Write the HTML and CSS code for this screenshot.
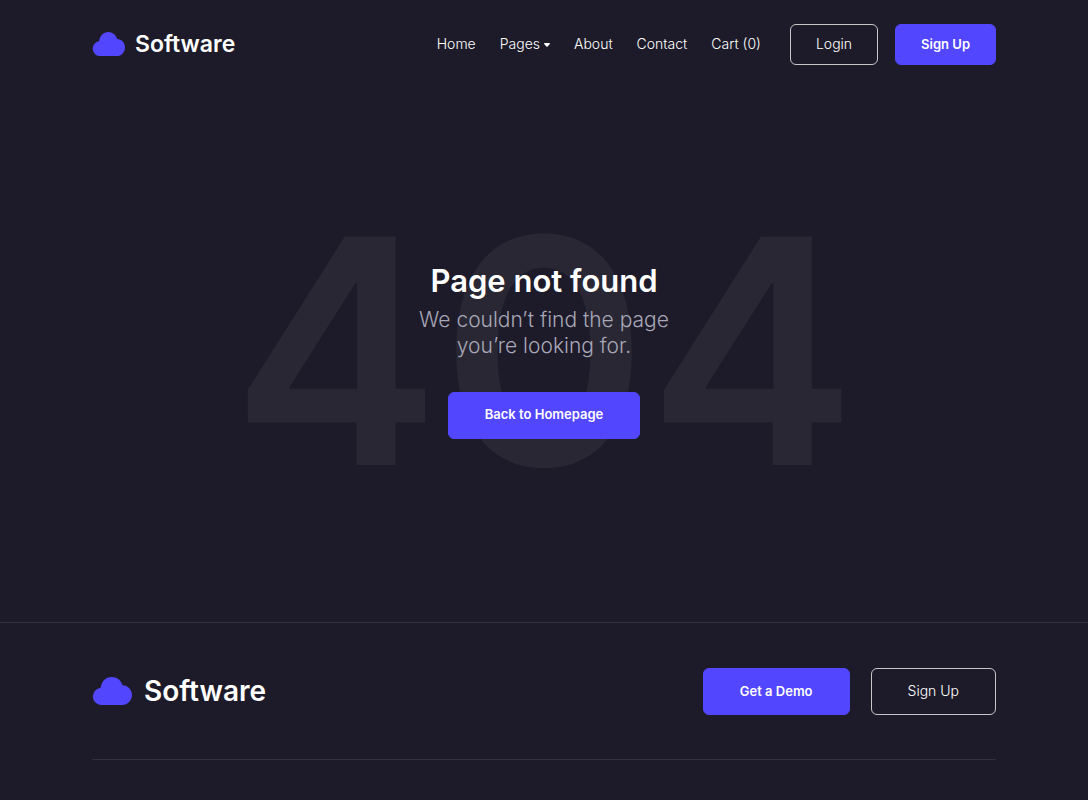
FILE: index.html
```html
<!DOCTYPE html>
<html lang="en">
<head>
<meta charset="utf-8">
<meta name="viewport" content="width=device-width, initial-scale=1">
<title>Page not found – Software</title>
<link rel="stylesheet" href="styles.css">
</head>
<body>
<header class="container header">
  <a class="logo" href="#">
    <svg class="logo-icon" viewBox="0 0 40 28" preserveAspectRatio="none" aria-hidden="true"><path d="M9 28a9 8.700 0 0 1-.3-17.300C9.300 4.500 13.800 0 19.700 0c5.300 0 9.500 3.400 10.800 8.200C36 8.400 40 12.700 40 18c0 5.600-4.300 10-10 10z"/></svg>
    <span>Software</span>
  </a>
  <nav class="nav">
    <a href="#">Home</a>
    <a class="nav-pages" href="#">Pages <svg class="caret" viewBox="0 0 6 4" aria-hidden="true"><path d="M.7 0h4.600q1 .3.500 1L3.600 3.600q-.6.500-1.200 0L.2 1Q-.3.300.7 0z"/></svg></a>
    <a href="#">About</a>
    <a href="#">Contact</a>
    <a href="#">Cart (0)</a>
  </nav>
  <div class="header-actions">
    <a class="btn btn-small btn-outline" href="#">Login</a>
    <a class="btn btn-small btn-primary" href="#">Sign Up</a>
  </div>
</header>
<main class="hero">
  <div class="hero-code" aria-hidden="true">404</div>
  <div class="hero-content">
    <h1>Page not found</h1>
    <p>We couldn’t find the page<br>you’re looking for.</p>
    <a class="btn btn-primary" href="#">Back to Homepage</a>
  </div>
</main>
<footer class="footer">
  <div class="container footer-row">
    <a class="logo logo-large" href="#">
      <svg class="logo-icon" viewBox="0 0 40 28" preserveAspectRatio="none" aria-hidden="true"><path d="M9 28a9 8.700 0 0 1-.3-17.300C9.300 4.500 13.800 0 19.700 0c5.300 0 9.500 3.400 10.800 8.200C36 8.400 40 12.700 40 18c0 5.600-4.300 10-10 10z"/></svg>
      <span>Software</span>
    </a>
    <div class="footer-actions">
      <a class="btn btn-primary" href="#">Get a Demo</a>
      <a class="btn btn-outline" href="#">Sign Up</a>
    </div>
  </div>
</footer>
</body>
</html>
```
FILE: styles.css
```css
* { box-sizing: border-box; }
body {
  margin: 0;
  background: #1d1b29;
  color: #fff;
  font-family: Inter, "Liberation Sans", sans-serif;
  font-size: 14px;
  font-weight: 300;
}
a { color: inherit; text-decoration: none; }
.container { max-width: 904px; margin: 0 auto; }
.header { display: flex; align-items: center; padding: 24px 0; }
.logo { display: flex; align-items: center; gap: 10px; padding-bottom: 2px; font-size: 23px; font-weight: 600; line-height: 28px; }
.logo-icon { width: 33px; height: 24px; fill: #5346ff; }
.logo-large { gap: 12px; font-size: 28px; line-height: 36px; }
.logo-large .logo-icon { width: 40px; height: 28px; }
.nav { display: flex; gap: 24px; margin-left: auto; padding-bottom: 2px; line-height: 20px; }
.nav-pages { display: flex; align-items: center; gap: 4px; }
.caret { width: 6px; height: 4px; margin-top: 3px; fill: #fff; }
.header-actions { display: flex; gap: 17px; margin-left: 29px; }
.btn {
  display: inline-flex;
  align-items: center;
  justify-content: center;
  min-height: 47px;
  padding: 0 36px 2px;
  border: 1px solid transparent;
  border-radius: 6px;
  line-height: 20px;
}
.btn-small { min-height: 41px; padding: 0 25px 2px; }
.btn-primary { background: #5346ff; border-color: #5346ff; font-size: 13px; font-weight: 600; }
.btn-outline { border-color: #c7c6cb; }
.hero { display: grid; place-items: center; padding: 88px 24px 96px; }
.hero-code, .hero-content { grid-area: 1 / 1; }
.hero-code { color: #282733; font-size: 314px; font-weight: 600; line-height: 349px; }
.hero-content { padding-bottom: 4px; text-align: center; }
.hero h1 { margin: 0 0 6px; font-size: 31px; font-weight: 600; line-height: 40px; }
.hero p { margin: 0 0 33px; color: #a9a7b8; font-size: 21px; line-height: 26px; }
.footer { border-top: 1px solid #322f3e; }
.footer-row { display: flex; align-items: center; justify-content: space-between; padding: 45px 0 44px; border-bottom: 1px solid #322f3e; margin-bottom: 40px; }
.footer-actions { display: flex; gap: 21px; }
```
